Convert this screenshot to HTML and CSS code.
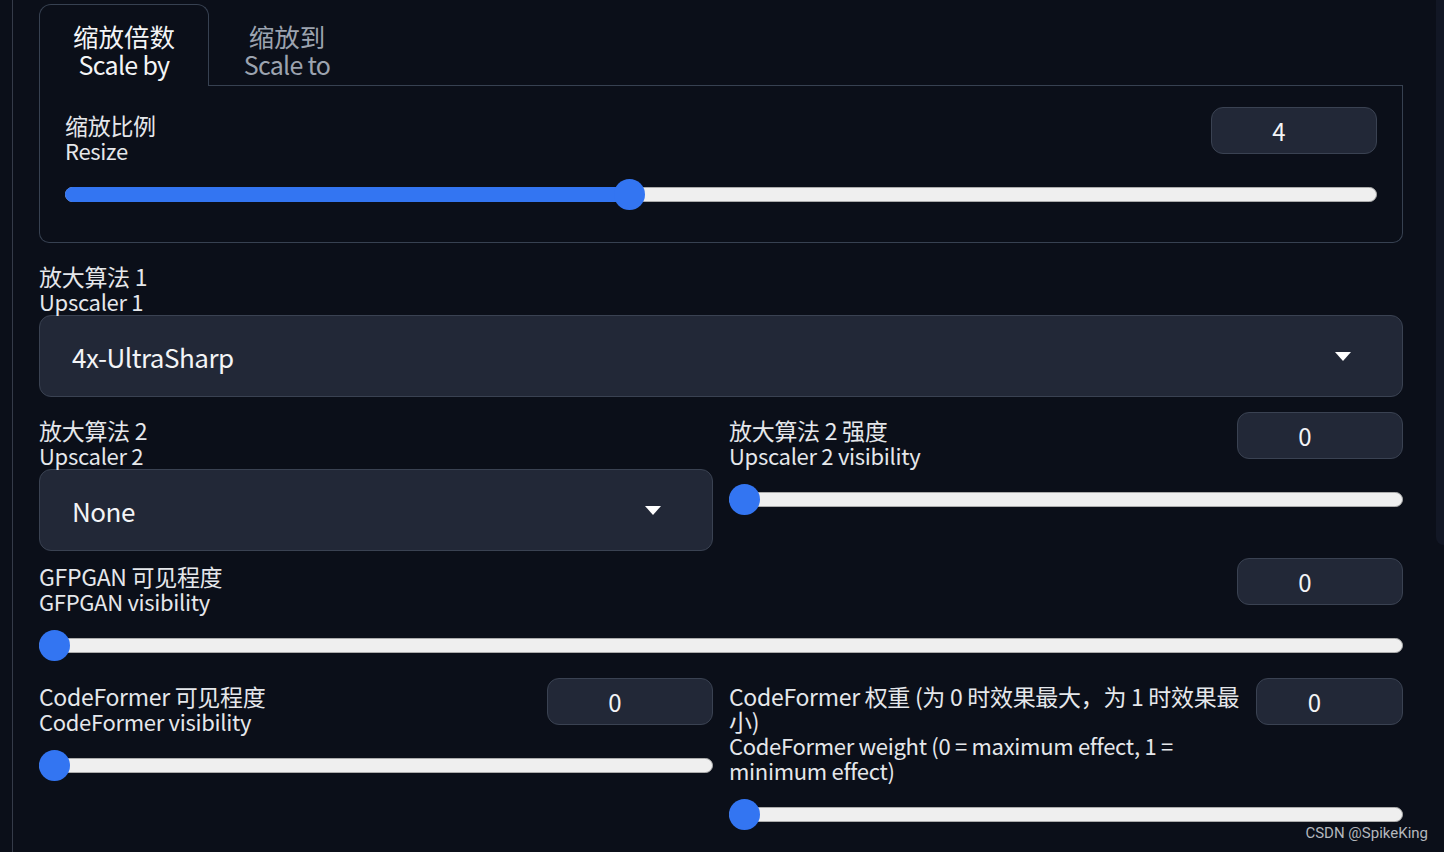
FILE: index.html
```html
<!DOCTYPE html>
<html lang="zh-CN">
<head>
<meta charset="utf-8">
<title>Upscale</title>
<link rel="stylesheet" href="styles.css">
</head>
<body>
<div class="page">
  <div class="gutter"></div>
  <main class="main">
    <section class="tabs">
      <div class="tab-row">
        <div class="tab active"><span class="tzh">缩放倍数</span><span class="ten">Scale by</span></div>
        <div class="tab"><span class="tzh">缩放到</span><span class="ten">Scale to</span></div>
      </div>
      <div class="tab-panel">
        <div class="head">
          <div class="lbl"><span class="zh">缩放比例</span><span class="en">Resize</span></div>
          <div class="num">4</div>
        </div>
        <div class="slider" style="--p:0.4286">
          <div class="track"></div>
          <div class="fill"></div>
          <div class="thumb"></div>
        </div>
      </div>
    </section>

    <section class="dd-block up1">
      <div class="lbl"><span class="zh">放大算法 1</span><span class="en">Upscaler 1</span></div>
      <div class="dropdown">
        <span>4x-UltraSharp</span>
        <svg class="caret" width="16" height="9" viewBox="0 0 16 9"><polygon points="0,0 16,0 8,9" fill="#ffffff"/></svg>
      </div>
    </section>

    <section class="row row2">
      <div class="col">
        <div class="lbl"><span class="zh">放大算法 2</span><span class="en">Upscaler 2</span></div>
        <div class="dropdown">
          <span>None</span>
          <svg class="caret" width="16" height="9" viewBox="0 0 16 9"><polygon points="0,0 16,0 8,9" fill="#ffffff"/></svg>
        </div>
      </div>
      <div class="col">
        <div class="head">
          <div class="lbl"><span class="zh">放大算法 2 强度</span><span class="en">Upscaler 2 visibility</span></div>
          <div class="num">0</div>
        </div>
        <div class="slider" style="--p:0">
          <div class="track"></div>
          <div class="thumb"></div>
        </div>
      </div>
    </section>

    <section class="field gfp">
      <div class="head">
        <div class="lbl"><span class="zh">GFPGAN 可见程度</span><span class="en">GFPGAN visibility</span></div>
        <div class="num">0</div>
      </div>
      <div class="slider" style="--p:0">
        <div class="track"></div>
        <div class="thumb"></div>
      </div>
    </section>

    <section class="row row3">
      <div class="col">
        <div class="head">
          <div class="lbl"><span class="zh">CodeFormer 可见程度</span><span class="en">CodeFormer visibility</span></div>
          <div class="num">0</div>
        </div>
        <div class="slider" style="--p:0">
          <div class="track"></div>
          <div class="thumb"></div>
        </div>
      </div>
      <div class="col">
        <div class="head gap">
          <div class="lbl grow"><span class="zh">CodeFormer 权重 (为 0 时效果最大，为 1 时效果最小)</span><span class="en">CodeFormer weight (0 = maximum effect, 1 = minimum effect)</span></div>
          <div class="num narrow">0</div>
        </div>
        <div class="slider" style="--p:0">
          <div class="track"></div>
          <div class="thumb"></div>
        </div>
      </div>
    </section>
  </main>
  <div class="side"></div>
  <div class="watermark">CSDN @SpikeKing</div>
</div>
</body>
</html>
```

FILE: styles.css
```css
html, body {
  margin: 0;
  padding: 0;
}

body {
  background: #0b0f19;
  color: #e5e7eb;
  font-family: "Noto Sans CJK SC", "Noto Sans", sans-serif;
  height: 852px;
  overflow: hidden;
}

.page {
  display: flex;
  height: 852px;
  position: relative;
}

.gutter {
  flex: none;
  width: 12px;
  border-right: 1px solid #353b49;
}

.side {
  flex: none;
  width: 8px;
  height: 545px;
  background: #121725;
  border-bottom-left-radius: 8px;
}

.main {
  flex: 1;
  min-width: 0;
  padding: 4px 33px 0 26px;
  display: flex;
  flex-direction: column;
}

/* Tabs */
.tab-row {
  display: flex;
  border-bottom: 1px solid #374151;
}

.tab {
  box-sizing: border-box;
  width: 156px;
  height: 81px;
  padding-top: 20px;
  text-align: center;
  color: #9ca3af;
}

.tab.active {
  width: 170px;
  height: 82px;
  margin-bottom: -1px;
  padding-top: 19px;
  border: 1px solid #374151;
  border-bottom: none;
  border-radius: 12px 12px 0 0;
  background: #0b0f19;
  color: #f3f4f6;
}

.tzh,
.ten {
  display: block;
  line-height: 27px;
}

.tzh {
  font-size: 25.5px;
  margin-top: -2px;
  margin-bottom: 2px;
}

.ten {
  font-size: 25px;
  letter-spacing: -0.7px;
}

.tab-panel {
  border: 1px solid #374151;
  border-top: none;
  border-radius: 0 0 10px 10px;
  padding: 21px 25px 32px;
}

/* Labels / heads */
.head {
  display: flex;
  justify-content: space-between;
  align-items: flex-start;
}

.head.gap {
  gap: 6px;
}

.lbl {
  margin-top: 6px;
  margin-bottom: 2px;
  color: #e5e7eb;
}

.lbl .zh,
.lbl .en {
  display: block;
  line-height: 24.5px;
}

.lbl .zh {
  font-size: 23px;
  letter-spacing: -0.3px;
}

.lbl .en {
  font-size: 22px;
  letter-spacing: -0.3px;
}

.lbl.grow {
  flex: 1;
  min-width: 0;
}

.num {
  flex: none;
  box-sizing: border-box;
  width: 166px;
  height: 47px;
  padding-right: 30px;
  border: 1px solid #3a4252;
  border-radius: 12px;
  background: #222837;
  display: flex;
  align-items: center;
  justify-content: center;
  font-size: 24px;
  color: #f3f4f6;
}

.num.narrow {
  width: 147px;
}

/* Sliders */
.slider {
  position: relative;
  height: 31px;
  margin-top: 15px;
  display: flex;
  align-items: center;
}

.track {
  width: 100%;
  height: 15px;
  box-sizing: border-box;
  border: 1.5px solid #acacac;
  border-radius: 8px;
  background: #efefef;
}

.fill {
  position: absolute;
  left: 0;
  top: 8px;
  height: 15px;
  border-radius: 8px 0 0 8px;
  background: #3375f2;
  width: calc(15.5px + (100% - 31px) * var(--p));
}

.thumb {
  position: absolute;
  top: 0;
  left: calc((100% - 31px) * var(--p));
  width: 31px;
  height: 31px;
  border-radius: 50%;
  background: #3375f2;
}

/* Dropdowns */
.dd-block.up1 {
  margin-top: 21px;
}

.dd-block .lbl {
  margin-top: 0;
}

.dropdown {
  box-sizing: border-box;
  height: 82px;
  margin-top: 1px;
  border: 1px solid #3a4252;
  border-radius: 12px;
  background: #222837;
  display: flex;
  align-items: center;
  justify-content: space-between;
  padding: 0 51px 0 32px;
  font-size: 26px;
  letter-spacing: -0.5px;
  color: #f3f4f6;
}

.caret {
  display: block;
  flex: none;
}

/* Rows */
.row {
  display: grid;
  grid-template-columns: 1fr 1fr;
  column-gap: 16px;
  align-items: start;
}

.row2 {
  margin-top: 15px;
}

.row2 .col > .lbl {
  margin-top: 6px;
}

.row2 .dropdown {
  margin-top: 0;
}

.gfp {
  margin-top: 7px;
}

.row3 {
  margin-top: 17px;
}

.watermark {
  position: absolute;
  right: 16px;
  top: 825px;
  font-family: Roboto, "Liberation Sans", sans-serif;
  font-size: 15px;
  line-height: 17px;
  color: #b4b7bd;
}
```
